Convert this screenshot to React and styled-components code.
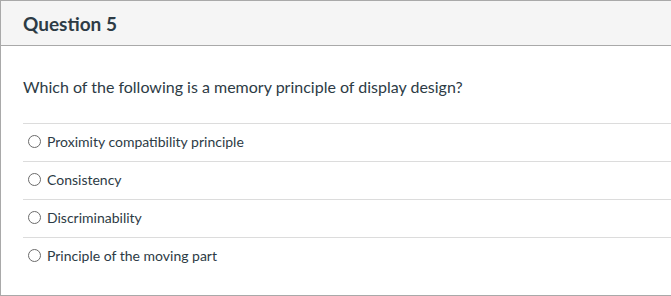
import React from "react";
import styled, { createGlobalStyle } from "styled-components";

const GlobalStyle = createGlobalStyle`
  body {
    margin: 0;
    background: #fff;
    font-family: Lato, "Open Sans", sans-serif;
  }
`;

const Panel = styled.div`
  width: 671px;
  height: 296px;
  box-sizing: border-box;
  border: 1px solid #a9a9a9;
  border-right: none;
  display: flex;
  flex-direction: column;
`;

const Header = styled.div`
  height: 45px;
  background: #f5f5f5;
  border-bottom: 1px solid #a9a9a9;
  display: flex;
  align-items: center;
  padding: 1px 0 0 22px;
  box-sizing: border-box;
`;

const Title = styled.h2`
  margin: 0;
  font-size: 19px;
  font-weight: 700;
  color: #2d3b45;
`;

const Body = styled.div`
  padding: 30px 0 0 22px;
`;

const Prompt = styled.p`
  margin: 0 0 25px;
  font-size: 16px;
  line-height: 22px;
  color: #2d3b45;
`;

const AnswerList = styled.div`
  display: flex;
  flex-direction: column;
`;

const Answer = styled.label`
  height: 38px;
  box-sizing: border-box;
  border-top: 1px solid #dcdcdc;
  display: flex;
  align-items: center;
  padding: 0 0 2px 5px;
  gap: 6px;
  font-size: 14px;
  color: #2d3b45;
`;

const Radio = styled.span`
  width: 13px;
  height: 13px;
  box-sizing: border-box;
  border: 1px solid #6b6b6b;
  border-radius: 50%;
  background: #fff;
`;

const answers = [
  "Proximity compatibility principle",
  "Consistency",
  "Discriminability",
  "Principle of the moving part",
];

export default function App() {
  return (
    <>
      <GlobalStyle />
      <Panel>
        <Header>
          <Title>Question 5</Title>
        </Header>
        <Body>
          <Prompt>Which of the following is a memory principle of display design?</Prompt>
          <AnswerList>
            {answers.map((a) => (
              <Answer key={a}>
                <Radio />
                {a}
              </Answer>
            ))}
          </AnswerList>
        </Body>
      </Panel>
    </>
  );
}
